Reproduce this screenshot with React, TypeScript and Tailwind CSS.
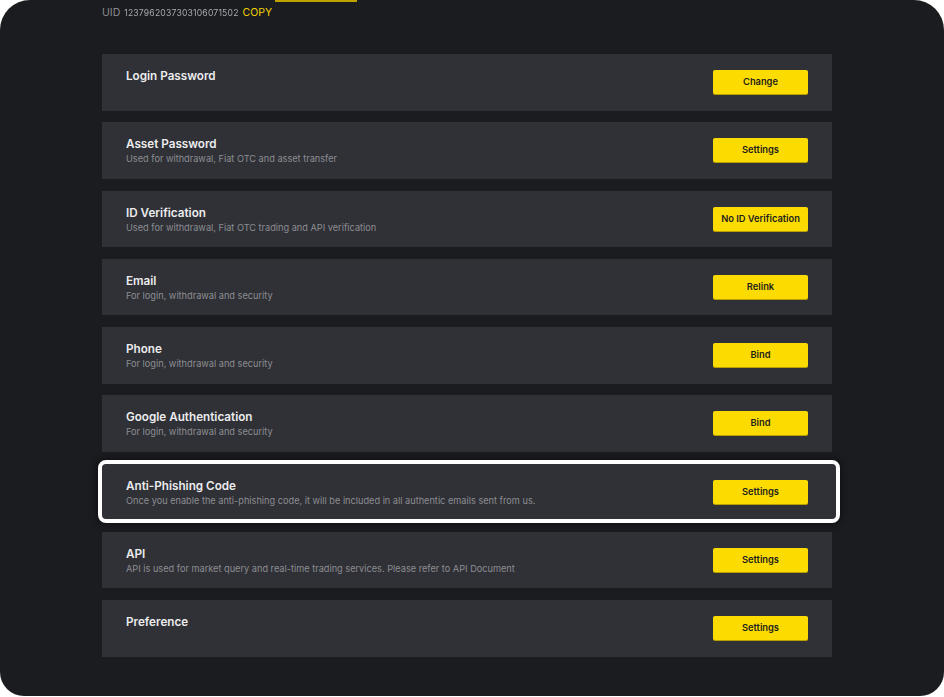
import React from "react";

type Row = { title: string; desc?: string; btn: string; highlight?: boolean };

const rows: Row[] = [
  { title: "Login Password", btn: "Change" },
  { title: "Asset Password", desc: "Used for withdrawal, Fiat OTC and asset transfer", btn: "Settings" },
  { title: "ID Verification", desc: "Used for withdrawal, Fiat OTC trading and API verification", btn: "No ID Verification" },
  { title: "Email", desc: "For login, withdrawal and security", btn: "Relink" },
  { title: "Phone", desc: "For login, withdrawal and security", btn: "Bind" },
  { title: "Google Authentication", desc: "For login, withdrawal and security", btn: "Bind" },
  {
    title: "Anti-Phishing Code",
    desc: "Once you enable the anti-phishing code, it will be included in all authentic emails sent from us.",
    btn: "Settings",
    highlight: true,
  },
  {
    title: "API",
    desc: "API is used for market query and real-time trading services. Please refer to API Document",
    btn: "Settings",
  },
  { title: "Preference", btn: "Settings" },
];

function RowContent({ r, pr }: { r: Row; pr: string }) {
  return (
    <div className={`flex h-full items-start justify-between pl-[24px] ${pr}`}>
      <div className="flex flex-col pt-[14px]">
        <div className="text-[11.7px] font-semibold leading-[16px] text-[#ececee]">{r.title}</div>
        {r.desc && <div className="text-[9.2px] leading-[14px] text-[#8c8d92]">{r.desc}</div>}
      </div>
      <button className="mt-[16px] flex h-[24px] w-[95px] items-center justify-center rounded-[2px] bg-[#fcdb00] text-[9.3px] font-semibold text-[#1e1e1e] shadow-[0_1px_0_#b89f00]">
        {r.btn}
      </button>
    </div>
  );
}

export default function App() {
  return (
    <div className="h-[697px] w-[944px] bg-white" style={{ fontFamily: "Inter, 'Noto Sans', sans-serif" }}>
      <div className="relative h-[696px] w-[944px] overflow-hidden rounded-t-[30px] rounded-b-[24px] bg-[#1b1c20]">
        <div className="absolute left-[275px] top-0 h-[1.5px] w-[82px] bg-[#bfa400]" />
        <div className="flex flex-col px-[102px] pr-[112px]">
          <div className="flex h-[26px] items-center gap-[4px] pt-[1px] text-[10.5px] leading-none">
            <span className="text-[#8a8b90]">UID</span>
            <span className="text-[8.6px] tracking-[0.2px] text-[#a9aaae] blur-[0.35px]">1237962037303106071502</span>
            <span className="text-[#f0d000]">COPY</span>
          </div>
          <div className="mt-[28px] flex flex-col gap-[11.75px]">
            {rows.map((r) =>
              r.highlight ? (
                <div
                  key={r.title}
                  className="-mb-[3px] -ml-[4px] -mr-[8px] -mt-[4px] h-[63.5px] rounded-[8px] border-4 border-white bg-[#303136] shadow-[0_0_8px_rgba(0,0,0,0.6)]"
                >
                  <RowContent r={r} pr="pr-[28px]" />
                </div>
              ) : (
                <div key={r.title} className="h-[56.5px] bg-[#303136]">
                  <RowContent r={r} pr="pr-[24px]" />
                </div>
              )
            )}
          </div>
        </div>
      </div>
    </div>
  );
}
